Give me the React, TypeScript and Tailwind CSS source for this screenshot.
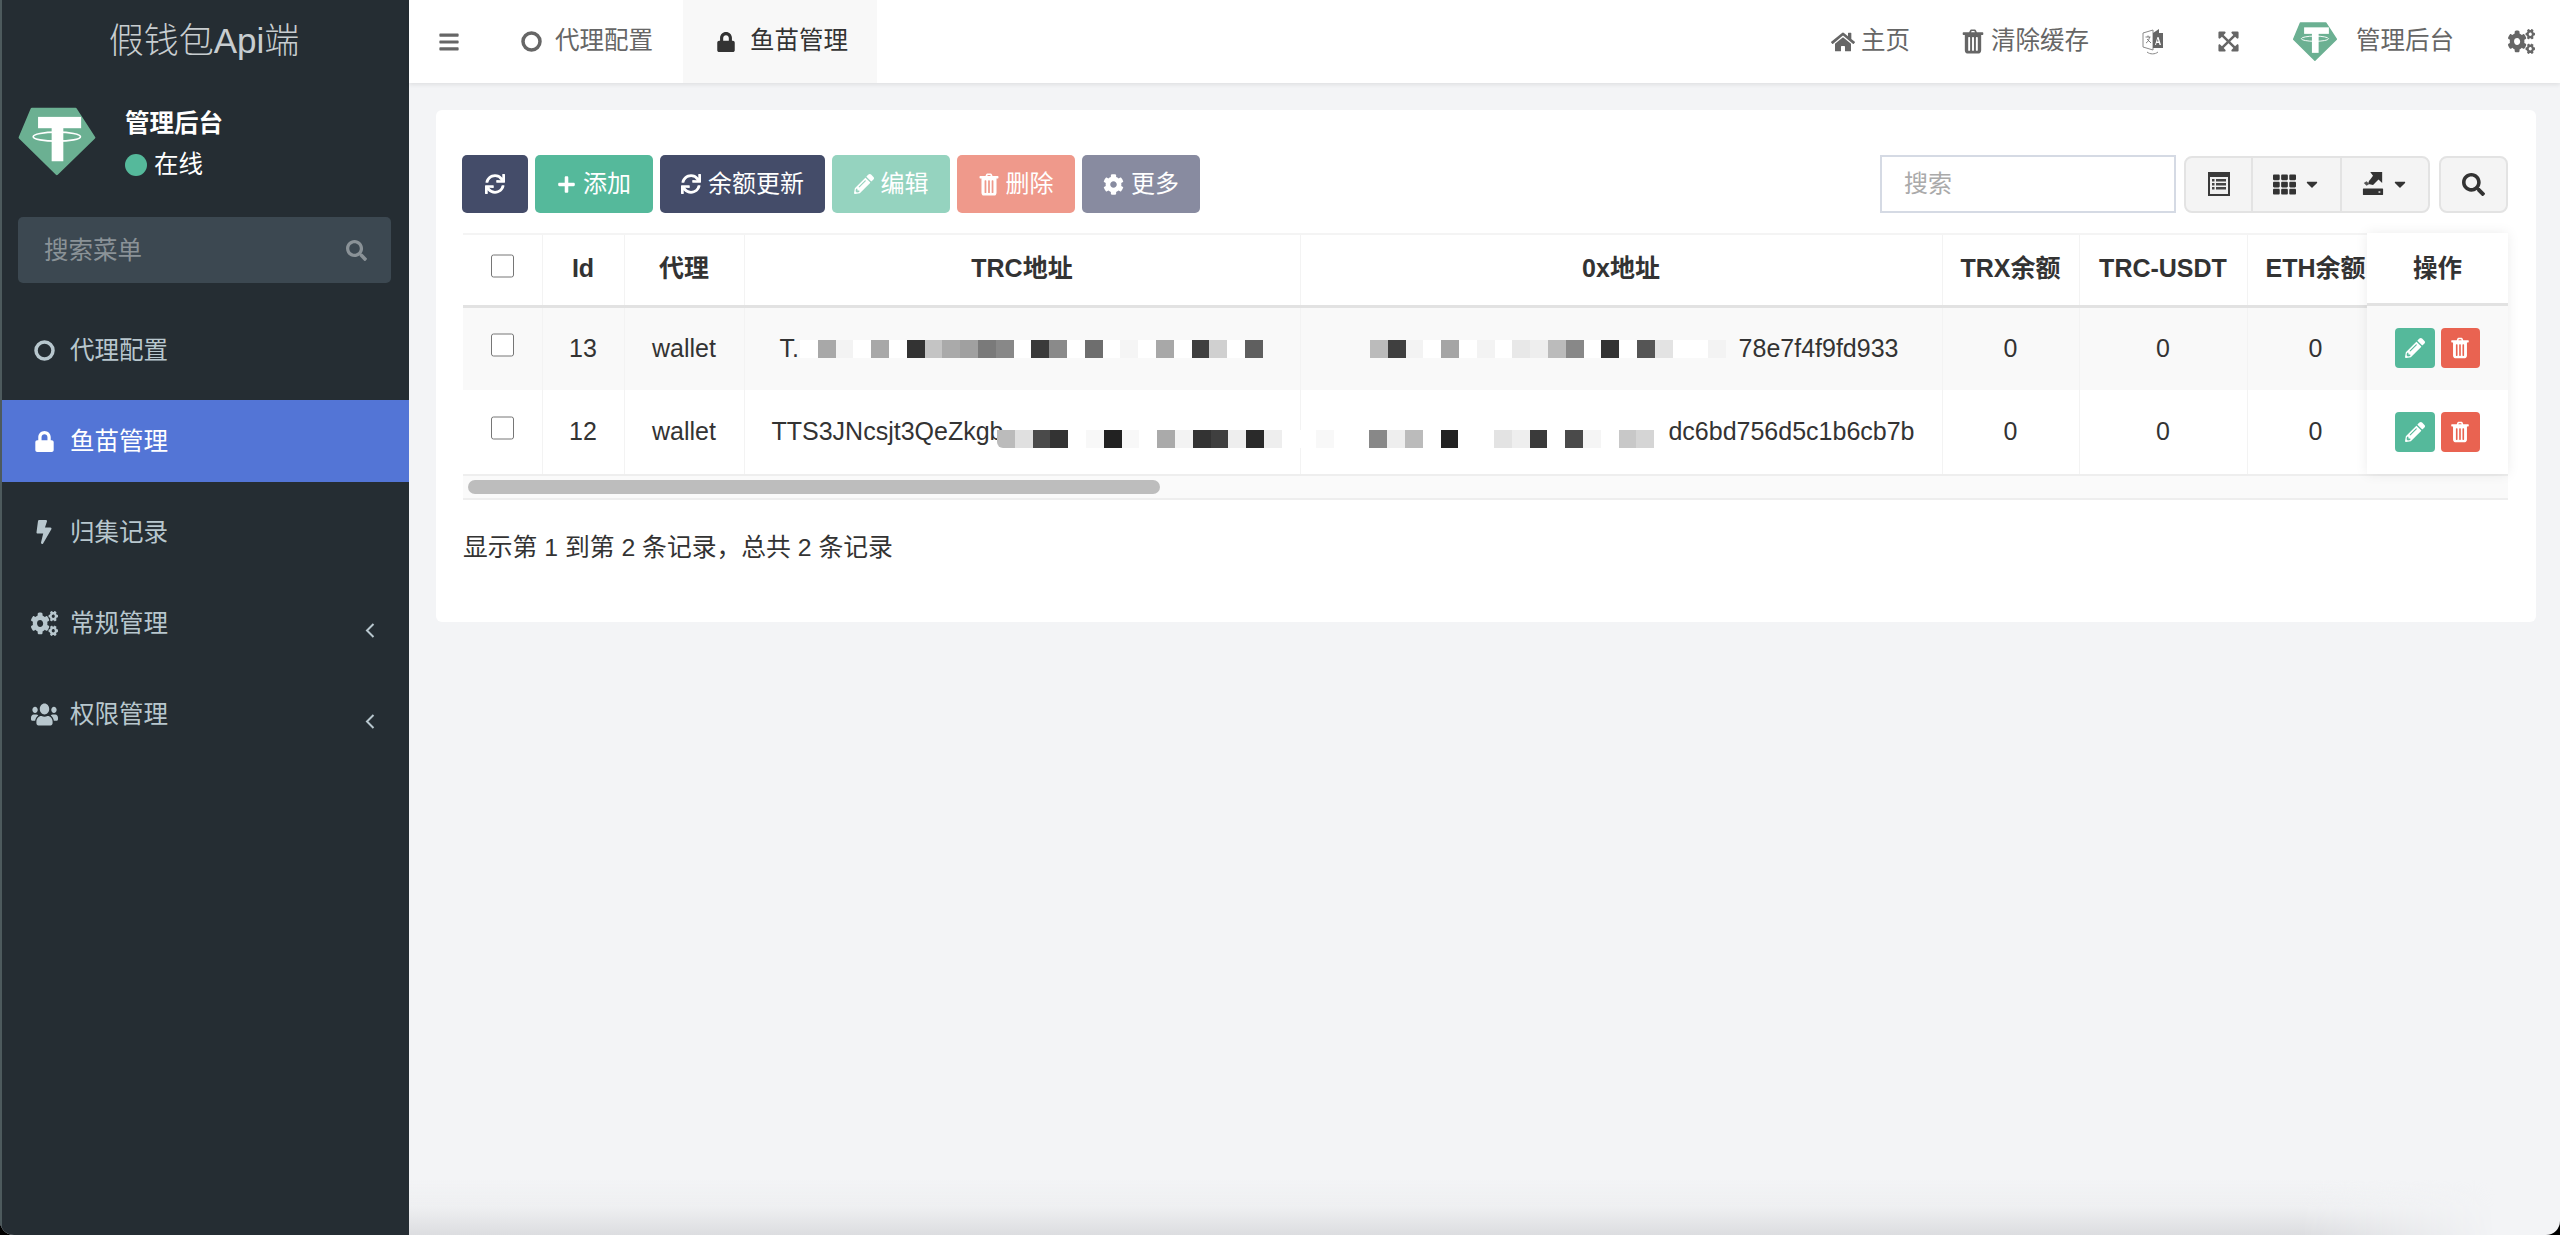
import React from "react";
import { FaBars, FaLock, FaBolt, FaCogs, FaUsers, FaHome, FaSync, FaPlus, FaPencilAlt, FaCog, FaSearch, FaTh, FaCaretDown, FaExpandArrowsAlt } from "react-icons/fa";

const Tether = ({ className }: { className?: string }) => (
  <svg viewBox="20 15 247 218" className={className}>
    <polygon points="66,24 201,24 258,112 143,224 29,112" fill="#6bb092" stroke="#6bb092" strokeWidth="8" strokeLinejoin="round" />
    <rect x="85" y="48" width="133" height="35" fill="#fff" />
    <rect x="127" y="70" width="36" height="115" fill="#fff" />
    <ellipse cx="143" cy="109" rx="73" ry="14" fill="none" stroke="#fff" strokeWidth="5" />
  </svg>
);

const Ring = () => (
  <svg viewBox="0 0 21 21" className="w-[21px] h-[21px]" fill="none" stroke="currentColor" strokeWidth="3.500">
    <circle cx="10.500" cy="10.500" r="8.500" />
  </svg>
);

const Trash = ({ className }: { className?: string }) => (
  <svg viewBox="0 0 22 26" className={className} fill="currentColor">
    <path fillRule="evenodd" d="M7 3.500 8 1.200C8.200.8 8.600.5 9 .5h4c.4 0 .8.3 1 .7l1 2.300h6c.4 0 .7.3.7.7v1.300c0 .4-.3.7-.7.7h-1.500v16c0 1.700-1 3.300-2.500 3.300H5c-1.500 0-2.500-1.600-2.500-3.300v-16H1c-.4 0-.7-.3-.7-.7V4.200c0-.4.3-.7.7-.7zM9 3.500h4l-.6-1.300H9.600zM6 9v13c0 .4.200.7.700.7h.6c.4 0 .7-.3.700-.7V9c0-.4-.3-.7-.7-.7h-.6C6.200 8.300 6 8.600 6 9zm4 0v13c0 .4.300.7.700.7h.6c.4 0 .7-.3.700-.7V9c0-.4-.3-.7-.7-.7h-.6c-.4 0-.7.300-.7.700zm4 0v13c0 .4.300.7.700.7h.6c.4 0 .7-.3.700-.7V9c0-.4-.3-.7-.7-.7h-.6c-.4 0-.7.300-.7.700z" />
  </svg>
);

const ListAlt = () => (
  <svg viewBox="0 0 22 24" className="w-[22px] h-[24px]">
    <rect width="22" height="24" fill="#3a3a3a" />
    <rect x="2" y="5" width="18" height="17" fill="#f0f0f0" />
    <g fill="#444">
      <rect x="4" y="7" width="2.500" height="2.500" /><rect x="8" y="7" width="10" height="2.500" />
      <rect x="4" y="11" width="2.500" height="2.500" /><rect x="8" y="11" width="10" height="2.500" />
      <rect x="4" y="15" width="2.500" height="2.500" /><rect x="8" y="15" width="10" height="2.500" />
    </g>
  </svg>
);

const ExportIcon = () => (
  <svg viewBox="0 0 24 26" className="w-[22px] h-[24px]" fill="#333">
    <path d="M9 0h13v12l-4-4-6 6-5-1c-.5-2 1-4 2-5l3-4z" />
    <path d="M2 12l3-2 3 3-3 2z" fill="#555" />
    <rect x="1" y="18" width="22" height="7" rx="0.500" />
    <rect x="18" y="21" width="2" height="1.500" fill="#eee" />
  </svg>
);

const LangIcon = () => (
  <svg viewBox="0 0 22 28" className="w-[22px] h-[28px]">
    <path d="M1 5 11 2v20L1 19z" fill="#fff" stroke="#8a8a8a" strokeWidth="1" />
    <path d="M11 5l6-4v4h4v15H11z" fill="#666" />
    <path d="M3.500 9h5M6 7.500v1.500M4 15c2-1 3-3 3.500-6M5 11l4 4" stroke="#666" strokeWidth="0.800" fill="none" />
    <path d="M13 17l2.500-8h1L19 17h-1.500l-.5-2h-2.500l-.5 2zM15 13.500h1.500l-.7-2.800z" fill="#fff" fillRule="evenodd" />
    <path d="M5 24c3 2.500 8 2.500 11 0" stroke="#8a8a8a" strokeWidth="1" fill="none" />
  </svg>
);

const menu = [
  { label: "代理配置", icon: <Ring /> },
  { label: "鱼苗管理", icon: <FaLock className="text-[21px]" />, active: true },
  { label: "归集记录", icon: <FaBolt className="text-[24px]" /> },
  { label: "常规管理", icon: <FaCogs preserveAspectRatio="none" className="w-[27px] h-[25px]" />, more: true },
  { label: "权限管理", icon: <FaUsers preserveAspectRatio="none" className="w-[27px] h-[25px]" />, more: true },
];

const btnBase = "h-[58px] rounded-[5px] flex items-center justify-center gap-[7px] text-white text-[24px]";

const W = "#ffffff";
const r1a = [W,"#a8a8a8","#f3f3f3",W,"#a8a8a8",W,"#333333","#c4c4c4","#aaaaaa","#a0a0a0","#7a7a7a","#888888",W,"#3a3a3a","#8a8a8a",W,"#6e6e6e",W,"#f5f5f5",W,"#a8a8a8",W,"#3f3f3f","#d0d0d0",W,"#5f5f5f"];
const r1b = ["#bbbbbb","#3f3f3f","#f3f3f3",W,"#a5a5a5",W,"#f3f3f3",W,"#e8e8e8","#eeeeee","#bbbbbb","#888888",W,"#333333",W,"#555555","#e3e3e3",W,W,"#f3f3f3"];
const r2a = ["#bbbbbb","#e0e0e0","#4a4a4a","#333333",W,"#f8f8f8","#222222","#f8f8f8",W,"#aaaaaa","#f3f3f3","#333333","#3f3f3f","#eeeeee","#2a2a2a","#eeeeee",W,W,"#f8f8f8"];
const r2b = ["#f8f8f8",W,W,"#888888","#eeeeee","#bbbbbb",W,"#222222",W,W,"#e3e3e3","#eeeeee","#3a3a3a",W,"#4a4a4a","#f5f5f5",W,"#c8c8c8","#d5d5d5"];

const Mosaic = ({ colors, x, y }: { colors: string[]; x: number; y: number }) => (
  <div className="absolute flex h-[18px]" style={{ left: x - 462, top: y - 232 }}>
    {colors.map((c, i) => (
      <span key={i} className="block w-[17.800px] h-full" style={{ backgroundColor: c }} />
    ))}
  </div>
);

const th = "border-r border-[#f3f3f3] font-bold text-[#333] text-center align-middle p-0 pb-[2px] whitespace-nowrap";
const td = "border-r border-[#f3f3f3] text-[#333] text-center align-middle p-0 whitespace-nowrap";
const checkHead = "block mx-auto w-[23px] h-[24px] -mt-[6px]";
const check = "block mx-auto w-[23px] h-[24px] -mt-[8px]";

const Row = ({ id, bg, trc, ox, pl, pr }: { id: number; bg: string; trc: string; ox: string; pl: string; pr: string }) => (
  <tr className={bg}>
    <td className={td}><input type="checkbox" className={check} /></td>
    <td className={td}>{id}</td>
    <td className={td}>wallet</td>
    <td className={`${td} !text-left ${pl}`}>{trc}</td>
    <td className={`${td} !text-right ${pr}`}>{ox}</td>
    <td className={td}>0</td>
    <td className={td}>0</td>
    <td className={td}>0</td>
    <td className={td}></td>
  </tr>
);

const Actions = ({ bg, h }: { bg: string; h: string }) => (
  <div className={`${bg} ${h} flex items-center justify-center gap-[6px] pr-[1px]`}>
    <div className="w-[40px] h-[40px] rounded-[4px] bg-[#55b99b] text-white flex items-center justify-center"><FaPencilAlt className="text-[20px]" /></div>
    <div className="w-[39px] h-[40px] rounded-[4px] bg-[#e96351] text-white flex items-center justify-center"><Trash className="w-[18px] h-[22px]" /></div>
  </div>
);

export default function App() {
  return (
    <div className="bg-black h-screen w-full overflow-hidden font-['Liberation_Sans','Noto_Sans_CJK_SC',sans-serif]">
      <div className="relative h-full w-full flex overflow-hidden rounded-b-[14px] bg-[#f3f4f6]">
        <aside className="w-[409px] shrink-0 h-full bg-[#252d33] border-l-2 border-[#4d5a5d] flex flex-col">
          <div className="h-[83px] flex items-center justify-center text-[35px] font-light text-[#c8cdd0] pr-[3px]">假钱包Api端</div>
          <div className="flex pl-[15px] mt-[23px] h-[72px]">
            <Tether className="w-[80px] h-[71px]" />
            <div className="ml-[28px] text-white">
              <div className="text-[24.500px] font-bold leading-[36px]">管理后台</div>
              <div className="flex items-center text-[24.500px] leading-[36px] mt-[5px]">
                <span className="w-[22px] h-[22px] rounded-full bg-[#55b99b] mr-[7px]" />在线
              </div>
            </div>
          </div>
          <div className="ml-[16px] mr-[18px] mt-[39px] h-[66px] rounded-[5px] bg-[#3c4851] flex items-center justify-between pl-[26px] pr-[24px] text-[#8a9297]">
            <span className="text-[24.500px] pt-[2px]">搜索菜单</span>
            <FaSearch className="text-[21px]" />
          </div>
          <nav className="mt-[26px] flex flex-col gap-[9px]">
            {menu.map((m) => (
              <div key={m.label} className={`h-[82px] flex items-center relative ${m.active ? "bg-[#5375d6] text-white" : "text-[#b8c7ce]"}`}>
                <span className="w-[54px] ml-[15px] flex justify-center">{m.icon}</span>
                <span className="text-[24.500px] -ml-[1px] pt-[2px]">{m.label}</span>
                {m.more && (
                  <svg viewBox="0 0 10 15" className="absolute left-[363px] top-[41px] w-[10px] h-[15px]" fill="none" stroke="currentColor" strokeWidth="2">
                    <path d="M8.500 1 2 7.500 8.500 14" />
                  </svg>
                )}
              </div>
            ))}
          </nav>
        </aside>

        <main className="flex-1 min-w-0 flex flex-col">
          <header className="h-[83px] bg-white flex items-stretch text-[#666] shadow-[0_2px_4px_rgba(0,0,0,0.08)] z-10 text-[24.500px]">
            <div className="flex items-center pl-[29px] w-[78px]"><FaBars className="text-[22px]" /></div>
            <div className="flex items-center gap-[13px] pl-[34px] w-[196px]"><Ring />代理配置</div>
            <div className="flex items-center gap-[14px] pl-[33px] w-[194px] bg-[#f8f8f8] text-[#333]"><FaLock className="text-[20px]" />鱼苗管理</div>
            <div className="ml-auto flex items-center pr-[25px]">
              <FaHome className="text-[24px]" /><span className="ml-[6px]">主页</span>
              <Trash className="w-[22px] h-[25px] ml-[52px]" /><span className="ml-[7px]">清除缓存</span>
              <span className="ml-[53px]"><LangIcon /></span>
              <FaExpandArrowsAlt className="text-[23px] ml-[53px]" />
              <Tether className="w-[46px] h-[41px] ml-[52px]" /><span className="ml-[18px]">管理后台</span>
              <FaCogs preserveAspectRatio="none" className="w-[27px] h-[25px] ml-[54px]" />
            </div>
          </header>

          <div className="pt-[27px] pl-[27px] pr-[24px]">
            <section className="h-[512px] bg-white rounded-[6px] pl-[26px] pr-[28px] pt-[45px]">
              <div className="flex items-center justify-between h-[58px]">
                <div className="flex gap-[7px]">
                  <button className={`${btnBase} w-[66px] bg-[#444c69]`}><FaSync className="text-[20px]" /></button>
                  <button className={`${btnBase} w-[118px] bg-[#55b99b]`}><FaPlus className="text-[19px]" />添加</button>
                  <button className={`${btnBase} w-[165px] bg-[#444c69]`}><FaSync className="text-[20px]" />余额更新</button>
                  <button className={`${btnBase} w-[118px] bg-[#95d3bf]`}><FaPencilAlt className="text-[20px]" />编辑</button>
                  <button className={`${btnBase} w-[118px] bg-[#ef998b]`}><Trash className="w-[20px] h-[23px]" />删除</button>
                  <button className={`${btnBase} w-[118px] bg-[#888ba0]`}><FaCog className="text-[21px]" />更多</button>
                </div>
                <div className="flex items-center text-[#333]">
                  <div className="w-[296px] h-[58px] border-2 border-[#d5dae4] bg-white flex items-center pl-[22px] text-[24px] text-[#aaa]">搜索</div>
                  <div className="ml-[8px] w-[246px] h-[57px] flex rounded-[8px] border-2 border-[#e3e3e3] bg-[#f4f4f4]">
                    <div className="w-[67px] flex items-center justify-center border-r-2 border-[#e3e3e3]"><ListAlt /></div>
                    <div className="w-[89px] flex items-center justify-center gap-[7px] border-r-2 border-[#e3e3e3]"><FaTh className="text-[23px]" /><FaCaretDown className="text-[18px]" /></div>
                    <div className="flex-1 flex items-center justify-center gap-[7px]"><ExportIcon /><FaCaretDown className="text-[18px]" /></div>
                  </div>
                  <div className="ml-[9px] w-[69px] h-[57px] flex items-center justify-center rounded-[8px] border-2 border-[#e3e3e3] bg-[#f4f4f4]"><FaSearch className="text-[23px]" /></div>
                </div>
              </div>

              <div className="relative mt-[20px] h-[267px] pl-[1px]">
                <div className="h-[241px] overflow-hidden border-t-2 border-[#f4f4f4]">
                  <table className="table-fixed border-collapse w-[2200px] text-[25px]">
                    <colgroup>
                      <col className="w-[79px]" /><col className="w-[82px]" /><col className="w-[120px]" /><col className="w-[556px]" /><col className="w-[642px]" /><col className="w-[137px]" /><col className="w-[168px]" /><col className="w-[137px]" /><col className="w-[279px]" />
                    </colgroup>
                    <thead>
                      <tr className="h-[71px] border-b-[3px] border-[#e2e2e2]">
                        <th className={th}><input type="checkbox" className={checkHead} /></th>
                        <th className={th}>Id</th>
                        <th className={th}>代理</th>
                        <th className={th}>TRC地址</th>
                        <th className={th}>0x地址</th>
                        <th className={th}>TRX余额</th>
                        <th className={th}>TRC-USDT</th>
                        <th className={th}>ETH余额</th>
                        <th className={th}></th>
                      </tr>
                    </thead>
                    <tbody>
                      <Row id={13} bg="bg-[#f9f9f9] h-[84px]" trc="T." ox="78e7f4f9fd933" pl="pl-[35px]" pr="pr-[43px]" />
                      <Row id={12} bg="bg-white h-[84px]" trc="TTS3JNcsjt3QeZkgb" ox="dc6bd756d5c1b6cb7b" pl="pl-[27px]" pr="pr-[27px]" />
                    </tbody>
                  </table>
                </div>
                <div className="h-[26px] bg-[#fafafa] border-y-2 border-[#eeeeee] flex items-center pl-[5px]">
                  <div className="w-[692px] h-[14px] rounded-full bg-[#bdbdbd]" />
                </div>

                <Mosaic colors={r1a} x={800} y={339} />
                <Mosaic colors={r1b} x={1370} y={339} />
                <div className="absolute left-[535px] top-[197px] flex h-[18px] rounded-bl-[6px] overflow-hidden">
                  {r2a.map((c, i) => (
                    <span key={i} className="block w-[17.800px] h-full" style={{ backgroundColor: c }} />
                  ))}
                </div>
                <Mosaic colors={r2b} x={1316} y={429} />

                <div className="absolute right-0 top-0 w-[141px] bg-white shadow-[0_0_12px_rgba(0,0,0,0.08)]">
                  <div className="h-[73px] pt-[2px] border-b-[3px] border-[#e2e2e2] flex items-center justify-center font-bold text-[#333] text-[24.500px]">操作</div>
                  <Actions bg="bg-[#f9f9f9]" h="h-[84px]" />
                  <Actions bg="bg-white" h="h-[84px]" />
                </div>
              </div>

              <div className="mt-[30px] ml-[1px] text-[24.800px] leading-[36px] text-[#333]">显示第 1 到第 2 条记录，总共 2 条记录</div>
            </section>
          </div>
        </main>

        <div className="absolute bottom-0 left-[409px] right-0 h-[55px] bg-[linear-gradient(to_bottom,transparent,#eeeff1_50%,#dcdde0)] [mask-image:linear-gradient(to_right,black_88%,transparent_97%)] pointer-events-none" />
      </div>
    </div>
  );
}
